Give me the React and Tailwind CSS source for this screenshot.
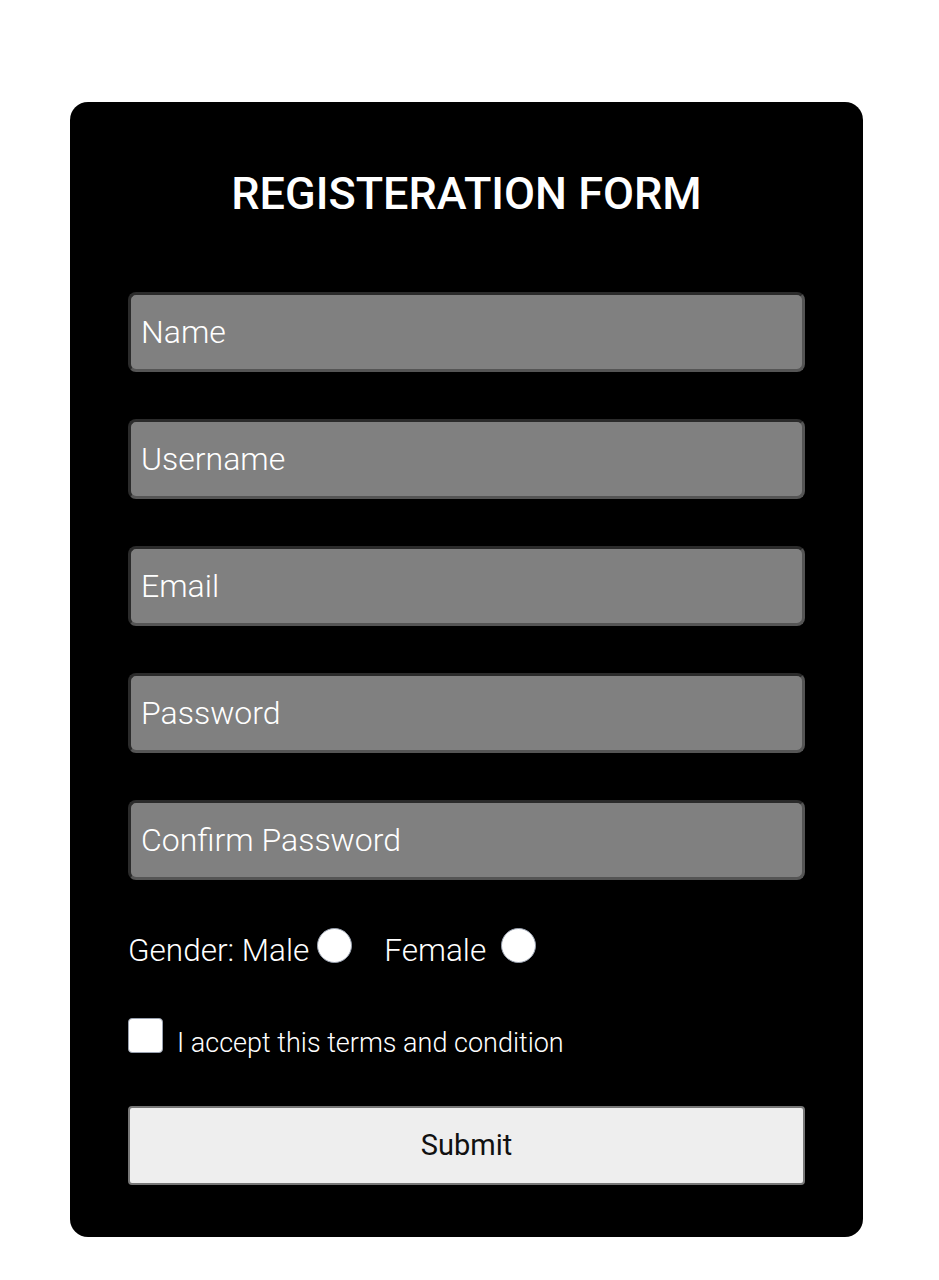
import React from 'react';

const fields = ['Name', 'Username', 'Email', 'Password', 'Confirm Password'];

const App = () => {
  return (
    <div className="min-h-[1280px] bg-white pt-[102px] font-['Roboto',sans-serif]">
      <div className="ml-[70px] w-[793px] bg-black rounded-[18px] px-[58px] pt-[64px] pb-[52px]">
        {/* Title */}
        <h1 className="text-center text-white text-[45px] font-medium leading-[56px]">
          REGISTERATION FORM
        </h1>

        {/* Inputs */}
        <div className="mt-[70px] flex flex-col gap-[47px]">
          {fields.map((f) => (
            <input
              key={f}
              type="text"
              placeholder={f}
              className="h-[80px] w-full rounded-lg bg-[#808080] border-[3px] border-[#2b2b2b] border-b-[#555] border-r-[#555] px-[10px] text-[32px] font-light text-white placeholder:text-white outline-none"
            />
          ))}
        </div>

        {/* Gender */}
        <div className="mt-[47px] flex items-center text-white text-[31.5px] font-light h-[36px]">
          <span className="mt-[12px]">Gender: Male</span>
          <span className="ml-[8px] inline-block w-[35px] h-[35px] rounded-full bg-white border border-gray-400" />
          <span className="ml-[32px] mt-[12px]">Female</span>
          <span className="ml-[15px] inline-block w-[35px] h-[35px] rounded-full bg-white border border-gray-400" />
        </div>

        {/* Terms */}
        <div className="mt-[55px] flex items-center h-[35px]">
          <span className="inline-block w-[35px] h-[35px] rounded-[4px] bg-white border border-gray-400" />
          <span className="ml-[14px] mt-[16px] text-white text-[27px] font-light">I accept this terms and condition</span>
        </div>

        {/* Submit */}
        <button className="mt-[53px] w-full h-[79px] bg-[#eeeeee] border-2 border-[#777] rounded-[4px] text-[29px] text-[#111]">
          Submit
        </button>
      </div>
    </div>
  );
};

export default App;
